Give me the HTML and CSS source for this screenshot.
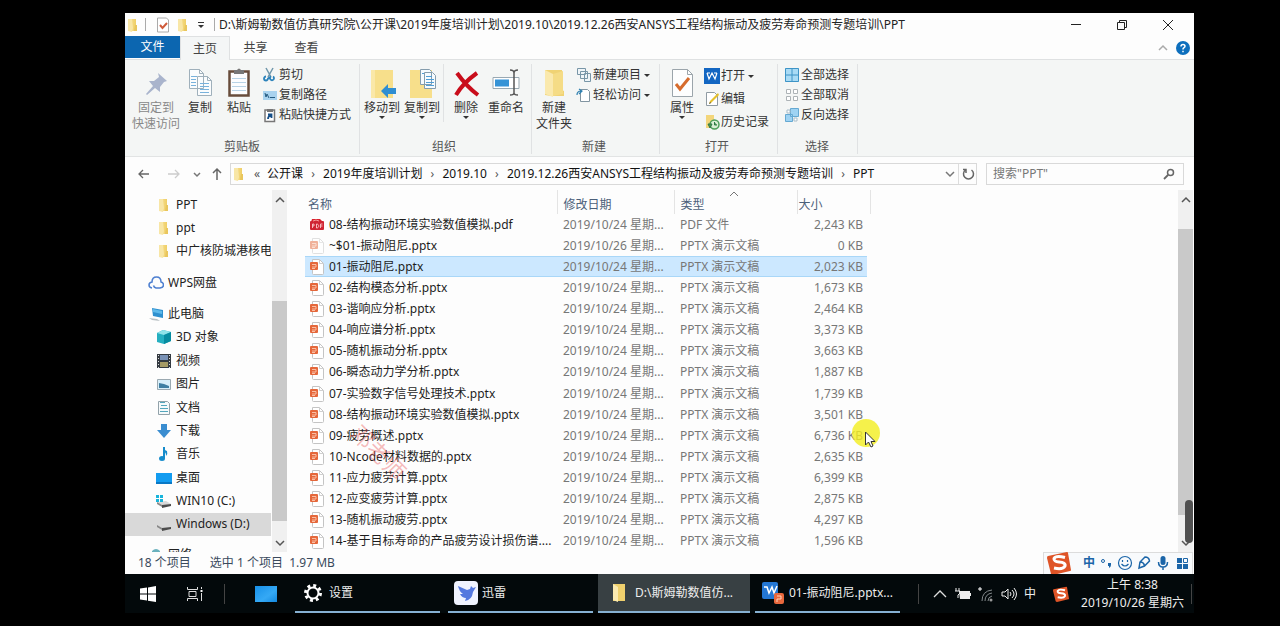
FILE: index.html
```html
<!DOCTYPE html>
<html lang="zh-CN">
<head>
<meta charset="utf-8">
<title>PPT</title>
<link rel="stylesheet" href="styles.css">
</head>
<body>
<svg class="defs" aria-hidden="true">
  <defs>
    <linearGradient id="gold" x1="0" x2="1"><stop offset="0" stop-color="#f9e29a"/><stop offset="1" stop-color="#efcf66"/></linearGradient>
    <linearGradient id="sky" x1="0" y1="0" x2="1" y2="1"><stop offset="0" stop-color="#1790e8"/><stop offset=".6" stop-color="#35a9f5"/><stop offset="1" stop-color="#1489e0"/></linearGradient>
  </defs>
  <symbol id="folder" viewBox="0 0 16 16"><path d="M3 2h8v12H3z" fill="url(#gold)"/><path d="M3 2h4l1 9-1 4-4-1z" fill="#f8e6a6"/><path d="M10 8h2v6h-3z" fill="#e9c65d"/></symbol>
  <symbol id="bigfolder" viewBox="0 0 24 32"><path d="M3 3h17v20l2 1v5H9l-6-1z" fill="#f0d374"/><path d="M3 3l8 4v23l-8-3z" fill="#fae9ad"/><path d="M11 7l10-3v23l-10 2z" fill="#f5dc86"/></symbol>
  <symbol id="pptx" viewBox="0 0 16 16"><path d="M3.500 .5h7l4 4v10q0 1-1 1h-9q-1 0-1-1z" fill="#fff" stroke="#c4c4c4"/><path d="M10.500 .5v4h4" fill="none" stroke="#d0d0d0"/><rect x="1" y="3" width="8" height="8" rx="1" fill="#e5673a"/><path d="M3 5.500h4v2.500H3m0 1.500h3" fill="none" stroke="#f9bfa5"/></symbol>
  <symbol id="pdf" viewBox="0 0 16 16"><path d="M3 2h8l3 3H2z" fill="#d9222e"/><rect x="1" y="4" width="14" height="9" rx="1" fill="#cf2433"/><path d="M3.500 11v-4h1.500v2H3.500m4-2v4c3 0 3-4 0-4m4 4v-4h2m-2 2h2" fill="none" stroke="#ffdada" stroke-width=".8"/><path d="M4 4q3-2 6 0" stroke="#f59a9a" fill="none"/></symbol>
  <symbol id="caretup" viewBox="0 0 12 12"><path d="M2 8l4-4 4 4" fill="none" stroke="currentColor" stroke-width="1.500"/></symbol>
  <symbol id="caretdown" viewBox="0 0 12 12"><path d="M2 4l4 4 4-4" fill="none" stroke="currentColor" stroke-width="1.500"/></symbol>
  <symbol id="sogou" viewBox="0 0 24 24"><path d="M1 5L20 1q1 0 1 1l3 17q0 1-1 1L6 24q-1 0-2-1L0 7q0-2 1-2z" fill="#df5427"/><path d="M18 6.500q-9-2.500-11 1-.5 3 5 3.500 7 .5 6 4-2 4-11 2" fill="none" stroke="#fff" stroke-width="3"/></symbol>
  <symbol id="drive" viewBox="0 0 16 16"><path d="M1 9l9-1 5 3-9 2z" fill="#d9d9d9"/><path d="M1 9l5 3v2l-5-3z" fill="#888"/><path d="M6 12l9-1v2l-9 2z" fill="#4c4c4c"/></symbol>
</svg>

<main class="window">
  <header class="titlebar">
    <svg class="i16" viewBox="0 0 16 16"><use href="#folder"/></svg>
    <span class="rule"></span>
    <svg class="i16" viewBox="0 0 16 16"><path d="M2.500 1h9l2 2v12h-11z" fill="#fff" stroke="#aaa"/><path d="M5 8l2.500 3L12 6" fill="none" stroke="#cf5b3b" stroke-width="2"/></svg>
    <svg class="i16" viewBox="0 0 16 16"><use href="#folder"/></svg>
    <svg class="i12" viewBox="0 0 12 12"><path d="M3 3.500h6" stroke="#333"/><path d="M3 6h6L6 9z" fill="#333"/></svg>
    <span class="rule"></span>
    <h1 class="path">D:\斯姆勒数值仿真研究院\公开课\2019年度培训计划\2019.10\2019.12.26西安ANSYS工程结构振动及疲劳寿命预测专题培训\PPT</h1>
    <div class="controls">
      <button aria-label="最小化"><svg class="i12" viewBox="0 0 12 12"><path d="M1 5.500h10" stroke="#222"/></svg></button>
      <button aria-label="还原"><svg class="i12" viewBox="0 0 12 12"><path d="M1.500 3.500h7v7h-7zM3.500 3.500v-2h7v7h-2" fill="none" stroke="#222"/></svg></button>
      <button aria-label="关闭"><svg class="i12" viewBox="0 0 12 12"><path d="M1 1l10 10M11 1L1 11" stroke="#222"/></svg></button>
    </div>
  </header>

  <nav class="tabs">
    <button class="tab file">文件</button>
    <button class="tab active">主页</button>
    <button class="tab">共享</button>
    <button class="tab">查看</button>
    <div class="help">
      <button aria-label="收起"><svg class="i12 pale" viewBox="0 0 12 12"><use href="#caretup"/></svg></button>
      <button aria-label="帮助"><svg class="i16" viewBox="0 0 16 16"><circle cx="8" cy="8" r="7" fill="#0d6fbd"/><path d="M6 6.500q0-2 2-2t2 1.800q0 1-1.500 1.900-.5.400-.5 1.300m0 1.200v1.500" fill="none" stroke="#fff" stroke-width="1.500"/></svg></button>
    </div>
  </nav>

  <section class="ribbon">
    <div class="group clip">
      <div class="tools">
        <button class="large wide dim"><svg class="i32" viewBox="0 0 32 32"><path d="M18 6l9 8-3 1-4 5v5l-5-4-8 7-1-1 7-8-4-5 5 0 5-4z" fill="#a9b4cc"/></svg>固定到<br>快速访问</button>
        <button class="large"><svg class="i32" viewBox="0 0 32 32"><path d="M5.500 2.500h10l4 4v15h-14zM13.500 9.500h10l4 4v15h-14z" fill="#fafcfd" stroke="#9fb0bb"/><path d="M15.500 2.500v4h4M23.500 9.500v4h4" fill="none" stroke="#9fb0bb"/><path d="M7 9.500h6M7 12.500h5M7 15.500h5M7 18.500h5M16 16.500h9M16 19.500h9M16 22.500h9M16 25.500h9" stroke="#78b2dc"/></svg>复制</button>
        <button class="large mid"><svg class="i32" viewBox="0 0 32 32"><rect x="6.500" y="4.500" width="19" height="24" fill="#fcfdfe" stroke="#674c3b" stroke-width="2.500"/><path d="M11 3h3q2-3 4 0h3v4H11z" fill="#777"/><path d="M9 11.500h14M9 15.500h14M9 19.500h14M9 23.500h14" stroke="#b8d3e6"/></svg>粘贴</button>
        <div class="stack">
          <button><svg class="i16" viewBox="0 0 16 16"><path d="M4 1l5 9M11 1L6 10" stroke="#6f96aa" stroke-width="1.500"/><path d="M4 9.500a2 2 0 1 0 2 2l3-2a2 2 0 1 0 2 0" fill="none" stroke="#2c83bb" stroke-width="1.800"/></svg>剪切</button>
          <button><svg class="i16" viewBox="0 0 16 16"><rect x="1" y="4" width="14" height="9" fill="#a8d2ee"/><path d="M3 6l1 4 1-3 2 4M8 10.500h5" fill="none" stroke="#235a80"/></svg>复制路径</button>
          <button><svg class="i16" viewBox="0 0 16 16"><path d="M3 3h9.500v11.500H3z" fill="#fff" stroke="#777" stroke-width="1.500"/><path d="M5 2h6v3H5z" fill="#777"/><path d="M6 12q0-3 3-4M6 7.500h3.500V11" fill="none" stroke="#164f88" stroke-width="1.800"/></svg>粘贴快捷方式</button>
        </div>
      </div>
      <h2>剪贴板</h2>
    </div>
    <div class="group organize">
      <div class="tools">
        <button class="large forty"><svg class="i32" viewBox="0 0 32 32"><path d="M5 3h22v28H5z" fill="#f7df8b"/><path d="M5 3h4v28H5z" fill="#fae8a8"/><path d="M15 24l7-7v4h8v6h-8v4z" fill="#2f8ed2"/></svg>移动到<i class="drop"></i></button>
        <button class="large forty"><svg class="i32" viewBox="0 0 32 32"><path d="M4 3h22v28H4z" fill="#f7df8b"/><path d="M14.500 2.500h9l2 2v13h-11zM18.500 5.500h8l3 3v13h-11z" fill="#f6fbfe" stroke="#859dad"/><path d="M16 6.500h2M20 9.500h6M20 12.500h8M20 15.500h8M20 18.500h8" stroke="#4f9ed6"/></svg>复制到<i class="drop"></i></button>
        <span class="divider"></span>
        <button class="large forty"><svg class="i32" viewBox="0 0 32 32"><path d="M7 6q10 14 21 22M27 6Q13 16 6 28" fill="none" stroke="#c90d1b" stroke-width="4"/></svg>删除<i class="drop"></i></button>
        <button class="large forty"><svg class="i32" viewBox="0 0 32 32"><path d="M3 10.500h26v11H3z" fill="#fff" stroke="#99a9b3"/><path d="M5 12.500h14v7H5z" fill="#3593d6"/><path d="M20 3q4 0 4 3v20q0 2-4 2M28 3q-4 0-4 3v20q0 2 4 2" fill="none" stroke="#555" stroke-width="1.500"/></svg>重命名</button>
      </div>
      <h2>组织</h2>
    </div>
    <div class="group create">
      <div class="tools">
        <button class="large forty"><svg class="i32" viewBox="0 0 24 32"><use href="#bigfolder"/></svg>新建<br>文件夹</button>
        <div class="stack">
          <button><svg class="i16" viewBox="0 0 16 16"><path d="M1.500 1.500h8v6h-8zM4.500 4.500h7v7h-7zM8.500 6.500h6v8h-6z" fill="#eff5f8" stroke="#7896a7"/></svg>新建项目<i class="drop"></i></button>
          <button><svg class="i16" viewBox="0 0 16 16"><path d="M4.500 2.500h7l2 2v10h-9z" fill="#fff" stroke="#8195a1"/><path d="M1 8q0-4 4-4M3 2l3 2-3 3" fill="none" stroke="#2f80b0" stroke-width="1.200"/></svg>轻松访问<i class="drop"></i></button>
        </div>
      </div>
      <h2>新建</h2>
    </div>
    <div class="group open">
      <div class="tools">
        <button class="large forty"><svg class="i32" viewBox="0 0 32 32"><path d="M6.500 2.500h15l5 5v22h-20z" fill="#fdfefe" stroke="#9ba5ab"/><path d="M21.500 2.500v5h5" fill="none" stroke="#9ba5ab"/><path d="M10 17l4 5 9-11" fill="none" stroke="#d66c2d" stroke-width="3"/></svg>属性<i class="drop"></i></button>
        <div class="stack loose">
          <button><svg class="i16" viewBox="0 0 16 16"><path d="M0 0h16v16H0z" fill="#1266c2"/><path d="M3 5l2 6 3-6 3 6 2-6M3 5h3M10 5h3" fill="none" stroke="#fff" stroke-width="1.200"/></svg>打开<i class="drop"></i></button>
          <button><svg class="i16" viewBox="0 0 16 16"><path d="M2.500 1.500h8l3 3v10h-11z" fill="#fff" stroke="#8f9ba3"/><path d="M5 13l1-3 8-8 1 2-8 8z" fill="#e6c12c"/><path d="M5 13l1-2 1 1z" fill="#444"/></svg>编辑</button>
          <button><svg class="i16" viewBox="0 0 16 16"><path d="M2 1h8v13H2z" fill="#f3d67b"/><circle cx="10.500" cy="10.500" r="4.500" fill="#d9eed5" stroke="#4c9e58" stroke-width="1.500"/><path d="M10.500 8v3h2.500M4 10h4l-2 4z" stroke="#307745" fill="#4c9e58"/></svg>历史记录</button>
        </div>
      </div>
      <h2>打开</h2>
    </div>
    <div class="group select">
      <div class="tools">
        <div class="stack">
          <button><svg class="i16" viewBox="0 0 16 16"><path d="M1 1h14v14H1z" fill="#a9dbf5"/><path d="M1.500 1.500h13v13h-13zM8 1v14M1 8h14" fill="none" stroke="#3e94c6"/></svg>全部选择</button>
          <button><svg class="i16" viewBox="0 0 16 16"><path d="M2.500 2.500h4v4h-4zM9.500 2.500h4v4h-4zM2.500 9.500h4v4h-4zM9.500 9.500h4v4h-4z" fill="#fff" stroke="#adb3b6"/></svg>全部取消</button>
          <button><svg class="i16" viewBox="0 0 16 16"><path d="M6.500 1.500h8v8h-8zM1.500 7.500h7v7h-7z" fill="#9fd3f3" stroke="#65a9d2"/><path d="M3 3h3v3H3zM10 11h3v3h-3z" fill="#fff" stroke="#a7bcc8"/></svg>反向选择</button>
        </div>
      </div>
      <h2>选择</h2>
    </div>
  </section>

  <section class="address">
    <button aria-label="后退"><svg class="i16" viewBox="0 0 16 16"><path d="M13 8H3m4-4L3 8l4 4" fill="none" stroke="#666" stroke-width="1.300"/></svg></button>
    <button class="next" aria-label="前进"><svg class="i16" viewBox="0 0 16 16"><path d="M2 8h10M9 4l4 4-4 4" fill="none" stroke="#ccc" stroke-width="1.300"/></svg></button>
    <button class="slim" aria-label="最近"><svg class="i12 grey" viewBox="0 0 12 12"><path d="M3 5l3 3 3-3" fill="none" stroke="currentColor" stroke-width="1.500"/></svg></button>
    <button class="slim" aria-label="上移"><svg class="i16" viewBox="0 0 16 16"><path d="M8 14V3M4 7l4-4 4 4" fill="none" stroke="#666" stroke-width="1.500"/></svg></button>
    <div class="crumbs">
      <svg class="i16" viewBox="0 0 16 16"><use href="#folder"/></svg>
      <span class="more">«</span>
      <a href="#">公开课</a><span class="sep">›</span><a href="#">2019年度培训计划</a><span class="sep">›</span><a href="#">2019.10</a><span class="sep">›</span><a href="#">2019.12.26西安ANSYS工程结构振动及疲劳寿命预测专题培训</a><span class="sep">›</span><a href="#">PPT</a>
      <button class="history" aria-label="历史"><svg class="i12 grey" viewBox="0 0 12 12"><use href="#caretdown"/></svg></button>
      <button class="reload" aria-label="刷新"><svg class="i16" viewBox="0 0 16 16"><path d="M11.500 4a5 5 0 1 1-6 0M3 3.500h3v3.500" fill="none" stroke="#666" stroke-width="1.500"/></svg></button>
    </div>
    <label class="search">
      <input type="text" placeholder='搜索"PPT"' aria-label="搜索">
      <svg class="i16" viewBox="0 0 16 16"><circle cx="9.500" cy="6.500" r="3" fill="none" stroke="#666" stroke-width="1.500"/><path d="M7 9l-4 4" stroke="#666" stroke-width="1.800"/></svg>
    </label>
  </section>

  <section class="content">
    <aside class="tree">
      <ul>
        <li class="sub"><svg class="i16" viewBox="0 0 16 16"><use href="#folder"/></svg>PPT</li>
        <li class="sub"><svg class="i16" viewBox="0 0 16 16"><use href="#folder"/></svg>ppt</li>
        <li class="sub"><svg class="i16" viewBox="0 0 16 16"><use href="#folder"/></svg>中广核防城港核电技</li>
        <li class="top"><svg class="i16" viewBox="0 0 16 16"><path d="M4 13q-3-.5-3-3t3-3q0-5 4.500-5T13 7q2.500.5 2.500 3T12 13H8q-2-.5-2.500-2.500" fill="none" stroke="#4d7fd0" stroke-width="1.500"/></svg>WPS网盘</li>
        <li class="top"><svg class="i16" viewBox="0 0 16 16"><path d="M4 2l11 2v8L5 10z" fill="#2e90cf"/><path d="M5 3l9 2v3L5 6z" fill="#5db9ea"/><path d="M1 12l8 1 3 2-8-1z" fill="#b9c0c4"/></svg>此电脑</li>
        <li class="sub"><svg class="i16" viewBox="0 0 16 16"><path d="M1 4l6-3 8 2v9l-7 3-7-2z" fill="#25afc0"/><path d="M1 4l6-3 8 2-7 3z" fill="#8fe3e9"/><path d="M8 6l7-3v9l-7 3z" fill="#078ca0"/></svg>3D 对象</li>
        <li class="sub"><svg class="i16" viewBox="0 0 16 16"><path d="M1 1h14v14H1z" fill="#343a41"/><path d="M4 2h8v5H4z" fill="#7991b5"/><path d="M4 9h8v5H4z" fill="#a59a64"/><path d="M2.500 2v13M13.500 2v13" stroke="#ddd" stroke-dasharray="1 2"/></svg>视频</li>
        <li class="sub"><svg class="i16" viewBox="0 0 16 16"><path d="M1.500 3.500h13v10h-13z" fill="#d8effa" stroke="#9ba9b1"/><path d="M3 7l5 1 5 2v2H3z" fill="#3f7fa3"/></svg>图片</li>
        <li class="sub"><svg class="i16" viewBox="0 0 16 16"><path d="M2.500 1.500h9l2 2v11h-11z" fill="#f6fafb" stroke="#92a2aa"/><path d="M5 5.500h6M4 8.500h8M4 11.500h8M4 2.500h5" stroke="#54a7bd"/></svg>文档</li>
        <li class="sub"><svg class="i16" viewBox="0 0 16 16"><path d="M5 1h6v6h4l-7 8-7-8h4z" fill="#3a8dd0"/></svg>下载</li>
        <li class="sub"><svg class="i16" viewBox="0 0 16 16"><path d="M8 1v11" stroke="#168ccc" stroke-width="2"/><ellipse cx="6" cy="12.500" rx="3" ry="2.500" fill="#168ccc"/><path d="M8 1q0 3 3 4 1 3-1 5 0-4-2-4z" fill="#168ccc"/></svg>音乐</li>
        <li class="sub"><svg class="i16" viewBox="0 0 16 16"><path d="M0 3h16v11H0z" fill="#139cf0"/><path d="M0 12h16v2H0z" fill="#0978c5"/></svg>桌面</li>
        <li class="sub"><svg class="i16" viewBox="0 0 16 16"><use href="#drive"/><path d="M0 2h3v3H0zM4 2h3v3H4zM0 6h3v3H0zM4 6h3v3H4z" fill="#18b5dc"/></svg>WIN10 (C:)</li>
        <li class="sub current"><svg class="i16" viewBox="0 0 16 16"><use href="#drive"/></svg>Windows (D:)</li>
        <li class="top cut"><svg class="i16" viewBox="0 0 16 16"><path d="M4 4q4-4 8 0v6H4z" fill="#6ab1bd"/></svg>网络</li>
      </ul>
    </aside>
    <div class="scroll left"><svg class="i12" viewBox="0 0 12 12"><use href="#caretup"/></svg><span class="thumb"></span><svg class="i12" viewBox="0 0 12 12"><use href="#caretdown"/></svg></div>
    <div class="files">
      <table>
        <colgroup><col class="c-name"><col class="c-date"><col class="c-type"><col class="c-size"><col class="c-edge"></colgroup>
        <thead><tr><th>名称</th><th>修改日期</th><th class="sorted">类型<svg class="i12" viewBox="0 0 12 12"><path d="M2 8l4-4 4 4" fill="none" stroke="#777"/></svg></th><th colspan="2">大小</th></tr></thead>
        <tbody>
          <tr><td><svg class="i16" viewBox="0 0 16 16"><use href="#pdf"/></svg>08-结构振动环境实验数值模拟.pdf</td><td>2019/10/24 星期...</td><td>PDF 文件</td><td>2,243 KB</td></tr>
          <tr class="temp"><td><svg class="i16" viewBox="0 0 16 16"><use href="#pptx"/></svg>~$01-振动阻尼.pptx</td><td>2019/10/26 星期...</td><td>PPTX 演示文稿</td><td>0 KB</td></tr>
          <tr class="chosen"><td><svg class="i16" viewBox="0 0 16 16"><use href="#pptx"/></svg>01-振动阻尼.pptx</td><td>2019/10/24 星期...</td><td>PPTX 演示文稿</td><td>2,023 KB</td></tr>
          <tr><td><svg class="i16" viewBox="0 0 16 16"><use href="#pptx"/></svg>02-结构模态分析.pptx</td><td>2019/10/24 星期...</td><td>PPTX 演示文稿</td><td>1,673 KB</td></tr>
          <tr><td><svg class="i16" viewBox="0 0 16 16"><use href="#pptx"/></svg>03-谐响应分析.pptx</td><td>2019/10/24 星期...</td><td>PPTX 演示文稿</td><td>2,464 KB</td></tr>
          <tr><td><svg class="i16" viewBox="0 0 16 16"><use href="#pptx"/></svg>04-响应谱分析.pptx</td><td>2019/10/24 星期...</td><td>PPTX 演示文稿</td><td>3,373 KB</td></tr>
          <tr><td><svg class="i16" viewBox="0 0 16 16"><use href="#pptx"/></svg>05-随机振动分析.pptx</td><td>2019/10/24 星期...</td><td>PPTX 演示文稿</td><td>3,663 KB</td></tr>
          <tr><td><svg class="i16" viewBox="0 0 16 16"><use href="#pptx"/></svg>06-瞬态动力学分析.pptx</td><td>2019/10/24 星期...</td><td>PPTX 演示文稿</td><td>1,887 KB</td></tr>
          <tr><td><svg class="i16" viewBox="0 0 16 16"><use href="#pptx"/></svg>07-实验数字信号处理技术.pptx</td><td>2019/10/24 星期...</td><td>PPTX 演示文稿</td><td>1,739 KB</td></tr>
          <tr><td><svg class="i16" viewBox="0 0 16 16"><use href="#pptx"/></svg>08-结构振动环境实验数值模拟.pptx</td><td>2019/10/24 星期...</td><td>PPTX 演示文稿</td><td>3,501 KB</td></tr>
          <tr><td><svg class="i16" viewBox="0 0 16 16"><use href="#pptx"/></svg>09-疲劳概述.pptx</td><td>2019/10/24 星期...</td><td>PPTX 演示文稿</td><td>6,736 KB</td></tr>
          <tr><td><svg class="i16" viewBox="0 0 16 16"><use href="#pptx"/></svg>10-Ncode材料数据的.pptx</td><td>2019/10/24 星期...</td><td>PPTX 演示文稿</td><td>2,635 KB</td></tr>
          <tr><td><svg class="i16" viewBox="0 0 16 16"><use href="#pptx"/></svg>11-应力疲劳计算.pptx</td><td>2019/10/24 星期...</td><td>PPTX 演示文稿</td><td>6,399 KB</td></tr>
          <tr><td><svg class="i16" viewBox="0 0 16 16"><use href="#pptx"/></svg>12-应变疲劳计算.pptx</td><td>2019/10/24 星期...</td><td>PPTX 演示文稿</td><td>2,875 KB</td></tr>
          <tr><td><svg class="i16" viewBox="0 0 16 16"><use href="#pptx"/></svg>13-随机振动疲劳.pptx</td><td>2019/10/24 星期...</td><td>PPTX 演示文稿</td><td>4,297 KB</td></tr>
          <tr><td><svg class="i16" viewBox="0 0 16 16"><use href="#pptx"/></svg>14-基于目标寿命的产品疲劳设计损伤谱....</td><td>2019/10/24 星期...</td><td>PPTX 演示文稿</td><td>1,596 KB</td></tr>
        </tbody>
      </table>
      <span class="watermark">邓老师</span>
      <span class="halo"></span>
      <svg class="pointer" viewBox="0 0 12 18"><path d="M1.500 1v13l3-3 2.500 5 2-1-2-4.500h4z" fill="#fff" stroke="#333"/></svg>
    </div>
    <div class="scroll right"><svg class="i12" viewBox="0 0 12 12"><use href="#caretup"/></svg><span class="thumb"></span><svg class="i12" viewBox="0 0 12 12"><use href="#caretdown"/></svg><span class="pill"></span></div>
  </section>

  <footer class="status">
    <span>18 个项目</span><span>选中 1 个项目&nbsp; 1.97 MB</span>
    <div class="ime">
      <svg class="i24" viewBox="0 0 24 24"><use href="#sogou"/></svg>
      <b>中</b>
      <svg class="i16" viewBox="0 0 16 16"><circle cx="5" cy="6" r="1.500" fill="none" stroke="#1b65a8"/><path d="M10 8h3v2q0 2-2 3v-2h-1z" fill="#1b65a8"/></svg>
      <svg class="i16" viewBox="0 0 16 16"><circle cx="8" cy="8" r="6.500" fill="none" stroke="#1b65a8" stroke-width="1.200"/><path d="M5.500 5v2M10.500 5v2M4.500 9q3.500 4 7 0" fill="none" stroke="#1b65a8" stroke-width="1.200"/></svg>
      <svg class="i16" viewBox="0 0 16 16"><path d="M3 13l1-6 5-5q4 0 4.500 4l-5 5zM4 7q4 0 4.500 4" fill="none" stroke="#1b65a8" stroke-width="1.500"/></svg>
      <svg class="i16" viewBox="0 0 16 16"><rect x="5.500" y="1" width="5" height="9" rx="2.500" fill="#1b65a8"/><path d="M3.500 7q0 5 4.500 5t4.500-5M8 12v3" fill="none" stroke="#1b65a8" stroke-width="1.500"/></svg>
      <svg class="i16" viewBox="0 0 16 16"><path d="M3 3h5v5H3zM3 9h5v5H3zM9 9h5v5H9z" fill="#1b65a8"/><path d="M9.500 3.500h4v4h-4z" fill="none" stroke="#1b65a8"/></svg>
    </div>
  </footer>

  <footer class="taskbar">
    <button class="start" aria-label="开始"><svg class="i16" viewBox="0 0 16 16"><path d="M0 2.500l7-1v6H0zM8 1.400L16 0v7.500H8zM0 8.500h7v6l-7-1zM8 8.500h8V16l-8-1.200z" fill="#fff"/></svg></button>
    <button class="view" aria-label="任务视图"><svg class="i16" viewBox="0 0 16 16"><path d="M.5 1v2.500h10V1M.5 15v-2.500h10V15M2 5.500h7v5H2zM14.500 1v2M14.500 7v8" fill="none" stroke="#ddd"/><path d="M13.500 4h2v2h-2z" fill="#fff"/></svg></button>
    <span class="bar"></span>
    <button class="desk" aria-label="桌面"><svg class="i24" viewBox="0 0 24 24"><path d="M1 4h22v16H1z" fill="url(#sky)"/></svg></button>
    <div class="apps">
      <button class="app"><svg class="i24 gear" viewBox="0 0 24 24"><circle cx="12" cy="12" r="5.500" fill="none" stroke="#fff" stroke-width="2"/><circle cx="12" cy="12" r="7.500" fill="none" stroke="#fff" stroke-width="3" stroke-dasharray="2.945 2.945"/></svg>设置</button>
      <button class="app"><svg class="i24" viewBox="0 0 24 24"><rect width="24" height="24" rx="4" fill="#f0f3ff"/><path d="M4 5l9 4 3-1 1-3 2 2 3-1-3 5q-1 8-8 9l1-3q-4 0-6-4l3 0q-4-3-5-8z" fill="#5478df"/></svg>迅雷</button>
      <button class="app live"><svg class="i24" viewBox="0 0 24 24"><path d="M6 3h12v17H6z" fill="#efd06d"/><path d="M6 3l5 3v15l-5-2z" fill="#fbeab0"/></svg>D:\斯姆勒数值仿...</button>
      <button class="app"><svg class="i24" viewBox="0 0 24 24"><rect x="1" y="1" width="16" height="17" rx="2" fill="#2477d4"/><path d="M3 6h3l2 6 3-6 2 6 3-7" fill="none" stroke="#fff" stroke-width="1.500"/><rect x="13" y="12" width="10" height="11" rx="2" fill="#e8683d"/><path d="M16 15h4v3h-4v3" fill="none" stroke="#ffd4bf"/></svg>01-振动阻尼.pptx...</button>
    </div>
    <div class="tray">
      <span class="bar"></span>
      <svg class="i16" viewBox="0 0 16 16"><path d="M2 11l6-6 6 6" fill="none" stroke="#ddd" stroke-width="1.300"/></svg>
      <svg class="i16" viewBox="0 0 16 16"><path d="M4 5h11v2h1v3h-1v3H5z" fill="#eee"/><path d="M1 2v3M4 2v3M0 5h5v2l-2 2v3" fill="none" stroke="#eee"/></svg>
      <svg class="i16" viewBox="0 0 16 16"><path d="M4 15Q4 5 14 4M7 15q0-7 7-8M10 15q0-4 4-5" fill="none" stroke="#83898c"/><circle cx="13" cy="14" r="1.500" fill="#999"/><path d="M0 3h4M2 1v4" stroke="#fff"/></svg>
      <svg class="i16" viewBox="0 0 16 16"><path d="M1 6h3l3-3v10l-3-3H1zM9 6q2 2 0 4M11 4q4 4 0 8M13 2q5 6 0 12" fill="none" stroke="#eee"/></svg>
      <span class="lang">中</span>
      <svg class="i16" viewBox="0 0 24 24"><use href="#sogou"/></svg>
      <time class="clock">上午 8:38<br>2019/10/26 星期六</time>
      <span class="bar"></span>
    </div>
  </footer>
</main>
</body>
</html>
```
FILE: styles.css
```css
* { box-sizing: border-box; }

body {
  margin: 0;
  min-height: 100vh;
  padding: 13px 86px 13px 125px;
  display: flex;
  background: #000;
  color: #222;
  font: 12px/16px "Noto Sans", "Noto Sans CJK SC", sans-serif;
}

button {
  display: flex;
  align-items: center;
  justify-content: center;
  padding: 0;
  border: 0;
  background: none;
  color: inherit;
  font: inherit;
  white-space: nowrap;
}

a { color: inherit; text-decoration: none; }
h1, h2, ul { margin: 0; padding: 0; font: inherit; list-style: none; }
svg { flex: none; display: block; }

.defs { position: absolute; width: 0; height: 0; }
.i12 { width: 12px; height: 12px; }
.i16 { width: 16px; height: 16px; }
.i24 { width: 24px; height: 24px; }
.i32 { width: 32px; height: 32px; }
.pale { color: #aaa; }
.grey { color: #777; }

.window {
  flex: 1;
  min-width: 0;
  display: flex;
  flex-direction: column;
  background: #fdfdfd;
}

/* Title bar */
.titlebar { display: flex; align-items: center; height: 23px; }
.titlebar .rule { width: 1px; height: 13px; margin: 0 9px 0 4px; background: #aaa; }
.titlebar .i16 + .i16 { margin-left: 4px; }
.titlebar .i12 { margin-left: 4px; }
.titlebar .i12 + .rule { margin: 0 4px 0 7px; }
.path { flex: 1; white-space: nowrap; }
.controls { display: flex; }
.controls button { width: 46px; height: 22px; }
.controls button:last-child { margin-right: 3px; }
.controls .i12 { margin: 0; }

/* Tabs */
.tabs { display: flex; height: 24px; border-bottom: 1px solid #dfe1e2; }
.tab { width: 51px; color: #444; }
.tab.file { width: 55px; height: 22px; background: #0c66b0; color: #fff; }
.tab.active { width: 50px; height: 24px; border: 1px solid #dfe1e2; border-bottom: 0; background: #f4f6f6; }
.help { display: flex; gap: 6px; margin: 0 3px 0 auto; }

/* Ribbon */
.ribbon { display: flex; height: 97px; padding: 4px 0 2px; background: #f4f6f5; border-bottom: 1px solid #e2e4e4; color: #333; }
.group { display: flex; flex-direction: column; border-right: 1px solid #e0e2e3; }
.group h2 { margin-top: auto; padding-right: 5px; height: 15px; text-align: center; color: #555; }
.tools { display: flex; align-items: flex-start; }
.clip { width: 235px; padding-left: 5px; }
.organize { width: 172px; padding-left: 2px; }
.create { width: 128px; padding-left: 2px; }
.open { width: 118px; padding-left: 2px; }
.select { width: 80px; padding-left: 4px; }
.large { flex-direction: column; justify-content: flex-start; width: 36px; padding-top: 3px; }
.large .i32 { margin-bottom: 1px; }
.wide { width: 52px; }
.mid { width: 42px; }
.forty { width: 40px; }
.dim { color: #888; }
.divider { width: 1px; height: 58px; margin: 0 2px 0 1px; background: #e0e2e3; }
.drop { border: 3px solid transparent; border-top-color: #333; border-bottom: 0; }
.stack { display: flex; flex-direction: column; gap: 4px; padding: 3px 0 0 2px; }
.stack button { justify-content: flex-start; gap: 1px; }
.stack .drop { margin-left: 2px; }
.loose { gap: 7px; padding-top: 4px; }

/* Address bar */
.address { display: flex; align-items: center; height: 33px; padding: 0 10px; }
.address > button { width: 30px; height: 22px; padding-right: 13px; }
.address > .next { width: 22px; padding-right: 5px; }
.address > .slim { width: 20px; padding: 0; }
.address > .slim + .slim { margin-right: 3px; }
.crumbs { flex: 1; display: flex; align-items: center; height: 22px; border: 1px solid #d9d9d9; color: #111; }
.crumbs .more { width: 20px; text-align: center; color: #555; }
.crumbs .sep { width: 20px; text-align: center; color: #555; }
.history { width: 16px; margin-left: auto; }
.reload { width: 18px; height: 20px; border-left: 1px solid #ddd; }
.search { display: flex; align-items: center; width: 198px; height: 22px; margin-left: 9px; padding: 0 6px; border: 1px solid #d9d9d9; }
.search input { flex: 1; min-width: 0; padding: 0; border: 0; outline: 0; background: none; font: inherit; }
.search input::placeholder { color: #777; opacity: 1; }

/* Content */
.content { flex: 1; display: flex; min-height: 362px; }
.tree { width: 147px; padding-top: 3px; overflow: hidden; }
.tree ul { display: flex; flex-direction: column; height: 100%; }
.tree li { flex: 1; display: flex; align-items: center; margin-right: 1px; overflow: hidden; white-space: nowrap; }
.tree .sub { gap: 4px; padding-left: 31px; }
.tree .top { gap: 4px; margin-top: 8px; padding-left: 23px; }
.tree .current { background: #d9d9d9; }
.tree .cut { flex: none; height: 8px; padding-top: 3px; align-items: flex-start; }

.scroll { position: relative; display: flex; flex-direction: column; align-items: center; justify-content: space-between; width: 15px; padding: 4px 0 3px; background: #f0f0f0; color: #555; }
.thumb { width: 100%; background: #c9c9c9; }
.left .thumb { flex: 0 0 220px; margin-top: 78px; }
.right .thumb { flex: 0 0 286px; }
.right { margin-right: 1px; }
.pill { position: absolute; right: 0; bottom: 9px; width: 8px; height: 43px; border-radius: 4px; background: #505050; }

.files { position: relative; flex: 1; min-width: 0; padding-left: 18px; }
.files table { width: 565px; height: 100%; table-layout: fixed; border-collapse: collapse; white-space: nowrap; }
.c-name { width: 252px; }
.c-date { width: 117px; }
.c-type { width: 123px; }
.c-size { width: 70px; }
.c-edge { width: 3px; }
.files th { height: 24px; padding: 5px 0 0 6px; border-right: 1px solid #e4e4e4; text-align: left; font-weight: normal; color: #4c607a; }
.files th:first-child { padding-left: 3px; }
.files th:last-child { padding-left: 1px; }
.sorted { position: relative; }
.sorted .i12 { position: absolute; top: -2px; left: 53px; }
.files td { padding: 0 0 0 6px; color: #777; }
.files td:first-child { padding-left: 24px; color: #1d1d1d; }
.files td:nth-child(4) { padding-right: 4px; text-align: right; }
.files td .i16 { float: left; margin-left: -20px; }
.temp .i16 { opacity: .5; }
.chosen td { background: #cce8ff; box-shadow: inset 0 1px #a9d7f8, inset 0 -1px #a9d7f8; }

.watermark { position: absolute; left: 59px; top: 250px; color: #e8505066; font-size: 22px; line-height: 24px; transform: rotate(45deg); }
.halo { position: absolute; left: 565px; top: 229px; width: 28px; height: 28px; border-radius: 50%; background: #f2ee1ecc; }
.pointer { position: absolute; left: 577px; top: 241px; width: 12px; height: 18px; }

/* Status bar */
.status { display: flex; align-items: center; height: 22px; padding-left: 13px; gap: 19px; color: #3a4a5c; }
.ime { display: flex; align-items: center; gap: 3px; width: 150px; height: 23px; margin: 0 1px 0 auto; padding-left: 3px; border: 1px solid #dcdcdc; background: #f8fafc; color: #1b65a8; }
.ime b { margin-left: 9px; }

/* Taskbar */
.taskbar { display: flex; align-items: center; height: 39px; background: #03090b; color: #eee; }
.start { width: 46px; }
.view { width: 48px; }
.bar { width: 1px; height: 20px; background: #444; }
.taskbar > .bar { margin: 0 29px 0 5px; }
.apps { display: flex; align-self: stretch; margin-left: 17px; gap: 5px; }
.app { width: 145px; justify-content: flex-start; gap: 4px; padding-left: 6px; border-bottom: 2px solid #86afd1; }
.app:first-child { margin-right: 3px; }
.app.live { width: 152px; padding-left: 9px; background: #384043; }
.tray { display: flex; align-items: center; gap: 7px; margin-left: auto; margin-right: 2px; }
.tray .bar:first-child { margin-right: 6px; }
.lang { margin-right: 10px; }
.clock { margin-left: 5px; text-align: center; line-height: 18px; }
```
